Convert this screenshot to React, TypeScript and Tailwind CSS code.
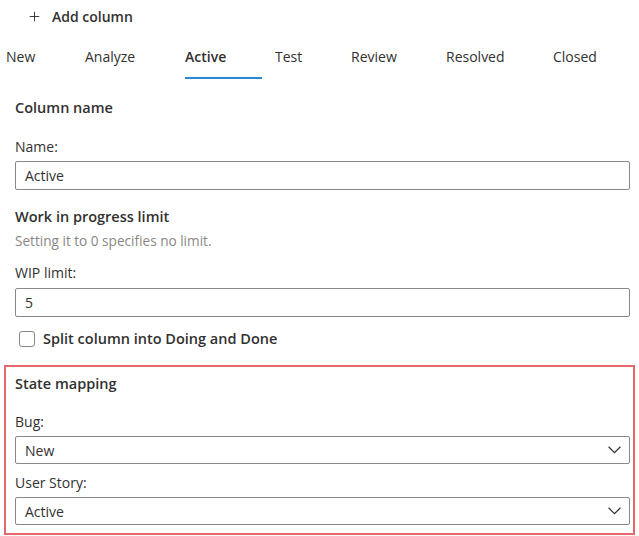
import { Plus } from 'lucide-react';

const tabs = [
  { label: 'New', width: 'w-[79px]' },
  { label: 'Analyze', width: 'w-[100px]' },
  { label: 'Active', width: 'w-[90px]', active: true },
  { label: 'Test', width: 'w-[76px]' },
  { label: 'Review', width: 'w-[95px]' },
  { label: 'Resolved', width: 'w-[107px]' },
  { label: 'Closed', width: 'w-[80px]' },
];

function TextField({ value }: { value: string }) {
  return (
    <div className="h-[29px] border border-[#8a8886] rounded-[2px] flex items-center px-[9px] text-[14px] text-[#323130]">
      {value}
    </div>
  );
}

function Dropdown({ value }: { value: string }) {
  return (
    <div className="h-[28px] border border-[#8a8886] rounded-[2px] flex items-center justify-between pl-[9px] pr-[8px] text-[14px] text-[#323130]">
      <span>{value}</span>
      <svg width="13" height="8" viewBox="0 0 13 8" fill="none" stroke="#323130" strokeWidth="1.2">
        <polyline points="0.6,0.8 6.5,6.6 12.4,0.8" />
      </svg>
    </div>
  );
}

export default function App() {
  return (
    <div
      className="w-[639px] h-[536px] bg-white text-[#323130] overflow-hidden"
      style={{ fontFamily: '"Segoe UI", "Open Sans", "Liberation Sans", sans-serif' }}
    >
      {/* Add column */}
      <div className="h-[32px] flex items-center pl-[27px] gap-[10px]">
        <Plus size={15} strokeWidth={1.5} />
        <span className="text-[14px] font-semibold">Add column</span>
      </div>

      {/* Tabs */}
      <div className="flex pl-[6px] h-[48px] items-center">
        {tabs.map((t) => (
          <div key={t.label} className={`${t.width} relative h-full flex items-center shrink-0`}>
            <span className={`text-[14px] ${t.active ? 'font-semibold' : ''}`}>{t.label}</span>
            {t.active && <div className="absolute left-0 bottom-[1px] w-[77px] h-[2px] bg-[#2b88d8]" />}
          </div>
        ))}
      </div>

      <div className="pl-[15px] pr-[9px]">
        <div className="mt-[18px] h-[20px] flex items-center text-[14.5px] font-semibold">Column name</div>
        <div className="mt-[18px] h-[20px] flex items-center text-[14px]">Name:</div>
        <div className="mt-[5px]">
          <TextField value="Active" />
        </div>

        <div className="mt-[17px] h-[20px] flex items-center text-[14.5px] font-semibold">Work in progress limit</div>
        <div className="mt-[4px] h-[20px] flex items-center text-[13.6px] text-[#8a8886]">
          Setting it to 0 specifies no limit.
        </div>
        <div className="mt-[11px] h-[20px] flex items-center text-[14px]">WIP limit:</div>
        <div className="mt-[6px]">
          <TextField value="5" />
        </div>

        <div className="mt-[14px] flex items-center gap-[8px] pl-[4px] h-[16px]">
          <div className="w-[16px] h-[16px] border border-[#8a8886] rounded-[3px]" />
          <span className="text-[14.5px] font-semibold">Split column into Doing and Done</span>
        </div>
      </div>

      {/* State mapping */}
      <div className="mt-[18px] ml-[4px] w-[631px] h-[170px] border-2 border-[#e4676d] pl-[9px] pr-[3px]">
        <div className="mt-[7px] h-[20px] flex items-center text-[14.5px] font-semibold">State mapping</div>
        <div className="mt-[17px] h-[20px] flex items-center text-[14px]">Bug:</div>
        <div className="mt-[5px]">
          <Dropdown value="New" />
        </div>
        <div className="mt-[8px] h-[20px] flex items-center text-[14px]">User Story:</div>
        <div className="mt-[5px]">
          <Dropdown value="Active" />
        </div>
      </div>
    </div>
  );
}
